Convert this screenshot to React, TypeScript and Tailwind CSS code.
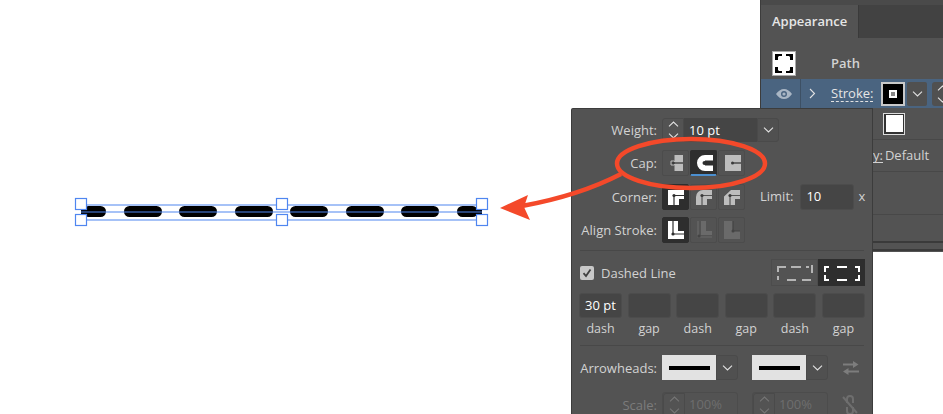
// App.tsx
import * as React from "react";

const Chevron = ({ dim = false }: { dim?: boolean }) => (
  <svg width="11" height="6" viewBox="0 0 11 6" fill="none" stroke={dim ? "#767676" : "#e2e2e2"} strokeWidth="1.1" className="shrink-0">
    <path d="M1 .7 5.5 5 10 .7" />
  </svg>
);

const Stepper = ({ dim = false }: { dim?: boolean }) => (
  <div className="flex h-full w-[22px] flex-col items-center justify-center gap-[6px] rounded-l-[3px] border border-[#4a4a4a]">
    <svg width="11" height="6" viewBox="0 0 11 6" fill="none" stroke={dim ? "#767676" : "#e2e2e2"} strokeWidth="1.1">
      <path d="M1 5.3 5.5 1 10 5.3" />
    </svg>
    <Chevron dim={dim} />
  </div>
);

const Drop = () => (
  <div className="flex h-full w-[22px] items-center justify-center rounded-r-[3px] border border-[#4a4a4a] bg-[#505050]">
    <Chevron />
  </div>
);

// the 20x20 glyphs inside the cap / corner / align buttons
const glyphs: Record<string, React.ReactNode> = {
  capButt: (
    <>
      <path d="M8.500 2H17v16H8.500z" fill="currentColor" />
      <path d="M5 8h3.500v4H5z" fill="none" stroke="#bdbdbd" strokeWidth="1" />
      <path d="M7 10h10" stroke="#4a4a4a" strokeWidth="1.300" />
      <circle cx="7.500" cy="10" r="1.300" fill="#3a3a3a" />
    </>
  ),
  capRound: (
    <>
      <path d="M19 2h-8a8 8 0 0 0 0 16h8v-5.500h-8v-5h8z" fill="currentColor" />
      <circle cx="10.500" cy="10" r="2" fill="#2e2e2e" />
    </>
  ),
  capSquare: (
    <>
      <path d="M3 2h16v16H3z" fill="currentColor" />
      <path d="M10 10h9" stroke="#4a4a4a" strokeWidth="1.300" />
      <circle cx="10.500" cy="10" r="1.500" fill="#3a3a3a" />
    </>
  ),
  cornerMiter: (
    <>
      <path d="M2 3h16v9h-5v6H2z" fill="currentColor" />
      <path d="M8 8.500h10M8 8.500V18" fill="none" stroke="#2e2e2e" strokeWidth="1.200" />
      <circle cx="8" cy="8.500" r="1.600" fill="#2e2e2e" />
    </>
  ),
  cornerRound: (
    <>
      <path d="M9 3h9v9h-5v6H2v-8a7 7 0 0 1 7-7z" fill="currentColor" />
      <path d="M8 8.500h10M8 8.500V18" fill="none" stroke="#555" strokeWidth="1.200" />
      <circle cx="8" cy="8.500" r="1.600" fill="#3a3a3a" />
    </>
  ),
  cornerBevel: (
    <>
      <path d="M9 3h9v9h-5v6H2V9.500z" fill="currentColor" />
      <path d="M8 8.500h10M8 8.500V18" fill="none" stroke="#555" strokeWidth="1.200" />
      <circle cx="8" cy="8.500" r="1.600" fill="#3a3a3a" />
    </>
  ),
  alignCenter: (
    <>
      <path d="M2 1h10v10h6v8H2z" fill="currentColor" />
      <path d="M7 1v13h11" fill="none" stroke="#2e2e2e" strokeWidth="1.200" />
      <circle cx="7" cy="14" r="1.600" fill="#2e2e2e" />
    </>
  ),
  alignInside: (
    <>
      <path d="M7 1h5v10h6v4H7z" fill="currentColor" />
      <path d="M4 1v16h14" fill="none" stroke="currentColor" strokeWidth="1.200" />
      <circle cx="5" cy="16" r="1.600" fill="#444" />
    </>
  ),
  alignOutside: (
    <>
      <path d="M2 1h9v10h7v8H2z" fill="currentColor" />
      <path d="M11 1v10h7" fill="none" stroke="#444" strokeWidth="1.200" />
      <circle cx="11" cy="11" r="1.500" fill="#444" />
    </>
  ),
};

const IconBtn = ({ name, on = false, dim = false, line = false }: { name: string; on?: boolean; dim?: boolean; line?: boolean }) => (
  <div
    className={`flex h-[26px] w-[27px] items-center justify-center rounded-[2px] border ${
      on ? "border-[#2e2e2e] bg-[#2e2e2e] text-white" : dim ? "border-[#4c4c4c] text-[#6a6a6a]" : "border-[#4c4c4c] text-[#bdbdbd]"
    } ${line ? "border-b-2 border-b-[#4b8fd0]" : ""}`}
  >
    <svg width="20" height="20" viewBox="0 0 20 20" className="shrink-0">
      {glyphs[name]}
    </svg>
  </div>
);

const Label = ({ children, dim = false }: { children: React.ReactNode; dim?: boolean }) => (
  <div className={`w-[86px] shrink-0 pr-[1px] pt-[2px] text-right ${dim ? "text-[#7c7c7c]" : ""}`}>{children}</div>
);

const DashBox = ({ value }: { value?: string }) => (
  <div className="flex h-[25px] w-[43px] items-center justify-center rounded-[3px] border border-[#4c4c4c] bg-[#454545] text-[13px] text-white">
    {value}
  </div>
);

const Swatch = () => (
  <div className="flex h-[25px] w-[76px]">
    <div className="flex w-[54px] items-center justify-center bg-[#e2e2e2]">
      <div className="h-[4px] w-[41px] bg-black" />
    </div>
    <Drop />
  </div>
);

const DashToggle = ({ on = false }: { on?: boolean }) => (
  <div className={`flex h-[27px] w-[47px] items-center justify-center border ${on ? "border-[#2e2e2e] bg-[#2e2e2e]" : "border-[#4c4c4c]"}`}>
    <svg width="36" height="16" viewBox="0 0 36 16" fill="none" stroke={on ? "#fff" : "#b5b5b5"} strokeWidth="2">
      {on ? (
        <path d="M5 2H1v5M13 2h10M31 2h4v5M1 10v5h4M13 15h10M31 15h4v-5" />
      ) : (
        <path d="M1 7V2h8M14 2h10M29 2h3M35 0v8M1 11v4M10 15h9M25 15h9" />
      )}
    </svg>
  </div>
);

function StrokePanel() {
  return (
    <div className="absolute left-[571px] top-[108px] h-[306px] w-[302px] overflow-hidden rounded-tl-[2px] border-l border-t border-r border-[#3c3c3c] bg-[#535353] text-[13px] text-[#d2d2d2]">
      <div className="flex flex-col">
        {/* weight */}
        <div className="mt-[9px] flex h-[24px] items-center gap-[4px]">
          <Label>Weight:</Label>
          <div className="flex h-full items-center">
            <Stepper />
            <div className="flex h-full w-[73px] items-center bg-[#454545] pl-[5px] pt-[2px] text-white">10 pt</div>
            <Drop />
          </div>
        </div>
        {/* cap */}
        <div className="mt-[8px] flex h-[26px] items-center gap-[4px]">
          <Label>Cap:</Label>
          <div className="flex gap-[1px]">
            <IconBtn name="capButt" />
            <IconBtn name="capRound" on line />
            <IconBtn name="capSquare" />
          </div>
        </div>
        {/* corner */}
        <div className="mt-[8px] flex h-[26px] items-center gap-[4px]">
          <Label>Corner:</Label>
          <div className="flex gap-[1px]">
            <IconBtn name="cornerMiter" on />
            <IconBtn name="cornerRound" />
            <IconBtn name="cornerBevel" />
          </div>
          <div className="ml-[11px] flex items-center">
            <span>Limit:</span>
            <div className="ml-[7px] flex h-[26px] w-[54px] items-center rounded-[3px] border border-[#4c4c4c] bg-[#454545] pl-[5px] text-white">10</div>
            <span className="ml-[4px]">x</span>
          </div>
        </div>
        {/* align */}
        <div className="mt-[7px] flex h-[26px] items-center gap-[4px]">
          <Label>Align Stroke:</Label>
          <div className="flex gap-[1px]">
            <IconBtn name="alignCenter" on />
            <IconBtn name="alignInside" dim />
            <IconBtn name="alignOutside" dim />
          </div>
        </div>

        <div className="mx-[8px] mt-[7px] h-px bg-[#484848]" />

        {/* dashed line */}
        <div className="mt-[8px] flex h-[27px] items-center pl-[8px] pr-[7px]">
          <div className="flex h-[14px] w-[14px] items-center justify-center rounded-[2px] bg-[#c8c8c8]">
            <svg width="10" height="10" viewBox="0 0 10 10" fill="none" stroke="#404040" strokeWidth="1.800">
              <path d="M1.500 5.200 4 8l4.500-6.500" />
            </svg>
          </div>
          <span className="ml-[7px] pt-[2px]">Dashed Line</span>
          <div className="ml-auto flex">
            <DashToggle />
            <DashToggle on />
          </div>
        </div>

        <div className="mt-[7px] flex justify-between pl-[7px] pr-[7px]">
          <DashBox value="30 pt" />
          <DashBox />
          <DashBox />
          <DashBox />
          <DashBox />
          <DashBox />
        </div>
        <div className="mt-[2px] flex h-[18px] items-center justify-between pl-[7px] pr-[7px] text-[12.5px]">
          {["dash", "gap", "dash", "gap", "dash", "gap"].map((t, i) => (
            <span key={i} className="w-[43px] text-center">
              {t}
            </span>
          ))}
        </div>

        <div className="mx-[8px] mt-[7px] h-px bg-[#484848]" />

        {/* arrowheads */}
        <div className="mt-[9px] flex h-[25px] items-center gap-[4px]">
          <Label>Arrowheads:</Label>
          <Swatch />
          <div className="ml-[10px]">
            <Swatch />
          </div>
          <svg className="ml-[11px]" width="16" height="14" viewBox="0 0 16 14" fill="#7d7d7d">
            <path d="M0 2.500h10V0l5.500 3.500L10 7V4.500H0zM16 9.500H5.500V7L0 10.500 5.500 14v-2.500H16z" />
          </svg>
        </div>

        {/* scale, disabled and cut off by the bottom edge */}
        <div className="mt-[12px] flex h-[25px] items-center gap-[4px]">
          <Label dim>Scale:</Label>
          <div className="flex h-full w-[76px] items-center rounded-[3px] border border-[#4c4c4c]">
            <Stepper dim />
            <span className="pl-[4px] text-[#6e6e6e]">100%</span>
          </div>
          <div className="ml-[10px] flex h-full w-[76px] items-center rounded-[3px] border border-[#4c4c4c]">
            <Stepper dim />
            <span className="pl-[4px] text-[#6e6e6e]">100%</span>
          </div>
          <svg className="ml-[10px]" width="16" height="20" viewBox="0 0 16 20" fill="none" stroke="#6e6e6e" strokeWidth="2">
            <path d="M5 8V4a3 3 0 0 1 6 0v4M5 12v4a3 3 0 0 0 6 0v-4M1 2l14 16" />
          </svg>
        </div>
      </div>
    </div>
  );
}

function AppearancePanel() {
  return (
    <div className="absolute left-[760px] top-0 h-[252px] w-[183px] border-l border-[#3c3c3c] bg-[#535353] text-[13px] text-[#d2d2d2]">
      <div className="h-[5px] bg-[#4a4a4a]" />
      <div className="flex h-[33px] bg-[#424242]">
        <div className="flex w-[98px] items-center border-r border-[#3a3a3a] bg-[#535353] pl-[11px] font-semibold text-[#e6e6e6]">Appearance</div>
      </div>
      <div className="mt-[10px] flex h-[31px] items-center pl-[11px]">
        <div className="flex h-[25px] w-[24px] items-center justify-center border border-[#aaa] bg-[#222]">
          <svg width="22" height="23" viewBox="0 0 22 23">
            <path d="M0 0h22v23H0z" fill="#fff" />
            <path d="M2 2h7v2H6l-1 1v3H2zM13 2h7v6h-3V5l-1-1h-3zM2 15h3v3l1 1h3v2H2zM17 15h3v6h-7v-2h3l1-1z" fill="#000" />
          </svg>
        </div>
        <span className="ml-[35px] font-semibold">Path</span>
      </div>
      <div className="flex h-[29px] items-center bg-[#4a6480] pl-[15px]">
        <svg width="16" height="10" viewBox="0 0 16 10" fill="#a9b6c4" className="shrink-0">
          <path d="M0 5c2-3 5-5 8-5s6 2 8 5c-2 3-5 5-8 5S2 8 0 5zm8-3a3 3 0 1 0 0 6 3 3 0 0 0 0-6z" />
          <circle cx="8" cy="5" r="1.600" />
        </svg>
        <div className="ml-[8px] h-full w-px shrink-0 bg-[#3d5064]" />
        <svg className="ml-[8px] shrink-0" width="7" height="11" viewBox="0 0 7 11" fill="none" stroke="#e2e2e2" strokeWidth="1.100">
          <path d="M1 1l4.500 4.500L1 10" />
        </svg>
        <span className="ml-[15px] w-[42px] shrink-0 border-b border-dashed border-[#e2e2e2] leading-[16px] text-[#e6e6e6]">Stroke:</span>
        <div className="ml-[8px] flex h-[24px] w-[24px] shrink-0 items-center justify-center border-2 border-[#c9c9c9] bg-black">
          <div className="flex h-[8px] w-[8px] items-center justify-center border-2 border-white bg-[#888]" />
        </div>
        <div className="ml-[2px] flex h-[24px] w-[20px] shrink-0 items-center justify-center rounded-[2px] bg-[#505050]">
          <Chevron />
        </div>
        <div className="ml-[5px] flex h-[24px] grow flex-col items-start justify-center gap-[6px] overflow-hidden rounded-l-[3px] bg-[#505050] pl-[5px]">
          <svg width="11" height="6" viewBox="0 0 11 6" fill="none" stroke="#e2e2e2" strokeWidth="1.100" className="shrink-0">
            <path d="M1 5.300 5.500 1 10 5.300" />
          </svg>
          <Chevron />
        </div>
      </div>
      <div className="flex h-[32px] items-center border-b border-[#484848] pl-[122px]">
        <div className="flex h-[22px] w-[22px] items-center justify-center border border-[#ddd] bg-[#333]">
          <div className="h-[17px] w-[17px] bg-white" />
        </div>
      </div>
      <div className="flex h-[32px] items-center border-b border-[#484848] pl-[112px]">
        <span className="border-b border-[#d2d2d2] leading-[14px]">y:</span>
        <span className="ml-[2px]">Default</span>
      </div>
      <div className="mt-[42px] h-px bg-[#484848]" />
      <div className="mt-[26px] h-[2px] bg-[#3a3a3a]" />
      <div className="mt-[6px] h-[2px] bg-[#3a3a3a]" />
    </div>
  );
}

function PathDrawing() {
  const dashes: [number, number][] = [
    [83, 106],
    [124, 162],
    [179, 217],
    [235, 273],
    [290, 328],
    [346, 384],
    [401, 439],
    [457, 478],
  ];
  const handles = [
    [81, 203],
    [282, 203],
    [482, 203],
    [81, 219],
    [282, 219],
    [482, 219],
  ];
  return (
    <svg className="absolute left-0 top-0" width="560" height="240" viewBox="0 0 560 240">
      <path d="M81 210h8v5h-8zM470 210h12v5h-12z" fill="#000" />
      {dashes.map(([a, b]) => (
        <rect key={a} x={a} y={206} width={b - a} height={11} rx={5.5} fill="#000" />
      ))}
      <g fill="none" stroke="#4f86f0" strokeWidth="1.200">
        <path d="M81 205h401M81 212h401M81 220h401" />
      </g>
      {handles.map(([x, y]) => (
        <rect key={`${x}-${y}`} x={x - 5.5} y={y - 4.5} width={11} height={11} fill="#fff" stroke="#4f86f0" strokeWidth="1.200" />
      ))}
    </svg>
  );
}

export default function App() {
  return (
    <div className="relative h-[414px] w-[943px] overflow-hidden bg-white font-['Open_Sans',sans-serif]">
      <PathDrawing />
      <AppearancePanel />
      <StrokePanel />
      {/* red callout drawn on top of the screenshot */}
      <svg className="absolute left-0 top-0" width="943" height="414" viewBox="0 0 943 414" fill="none">
        <ellipse cx="691" cy="163.500" rx="74" ry="24.500" stroke="#f4492a" strokeWidth="4.500" />
        <path d="M621 174C590 190 555 200 522 206" stroke="#f4492a" strokeWidth="4.500" />
        <path d="M500 208 528 195 524 207 530 220z" fill="#f4492a" />
      </svg>
    </div>
  );
}
